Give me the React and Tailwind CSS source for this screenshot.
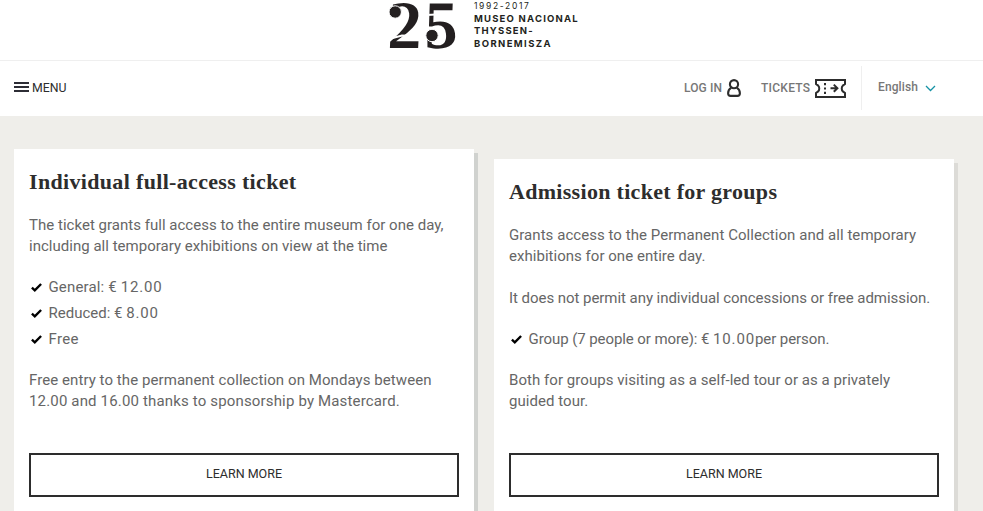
import clsx from 'clsx'

const TICKETS = [
  {
    title: 'Individual full-access ticket',
    titleClass: 'tracking-[0.33px]',
    cardClass: 'mt-[33px] shadow-[4px_4px_0_#d0d2cf]',
    blocks: [
      {
        gapClass: 'mt-[21px]',
        lines: [
          ['The ticket grants full access to the entire museum for one day,', 'tracking-[0.02px]'],
          ['including all temporary exhibitions on view at the time', 'tracking-[0.02px]'],
        ],
      },
      {
        gapClass: 'mt-[20px]',
        items: [
          { label: 'General: € ', price: '12.00', labelClass: 'tracking-[0.15px]' },
          { label: 'Reduced: € ', price: '8.00', labelClass: 'tracking-[0px]' },
          { label: 'Free', labelClass: 'tracking-[0.3px]' },
        ],
      },
      {
        gapClass: 'mt-[20px]',
        lines: [
          ['Free entry to the permanent collection on Mondays between', 'tracking-[0.07px]'],
          ['12.00 and 16.00 thanks to sponsorship by Mastercard.', 'tracking-[0.16px]'],
        ],
      },
    ],
  },
  {
    title: 'Admission ticket for groups',
    titleClass: 'tracking-[0.3px]',
    cardClass: 'mt-[43px] shadow-[4px_4px_0_#dcdbd7]',
    blocks: [
      {
        gapClass: 'mt-[21px]',
        lines: [
          ['Grants access to the Permanent Collection and all temporary', 'tracking-[0.05px]'],
          ['exhibitions for one entire day.', 'tracking-[0.03px]'],
        ],
      },
      {
        gapClass: 'mt-[21px]',
        lines: [['It does not permit any individual concessions or free admission.', 'tracking-[-0.05px]']],
      },
      {
        gapClass: 'mt-[20px]',
        items: [{ label: 'Group (7 people or more): € ', price: '10.00', rest: 'per person.', labelClass: 'tracking-[-0.08px]' }],
      },
      {
        gapClass: 'mt-[20px]',
        lines: [
          ['Both for groups visiting as a self-led tour or as a privately', 'tracking-[0.05px]'],
          ['guided tour.', 'tracking-[0.05px]'],
        ],
      },
    ],
  },
]

function Logo() {
  return (
    <div className="flex h-[60px] pl-[389px] text-[#231f20]">
      <div className="relative h-[50px] w-[85px]">
        <span className="inline-block origin-bottom-left skew-x-[8deg] whitespace-nowrap pl-[2px] font-['Liberation_Serif',serif] text-[68px] font-bold italic leading-[50px] tracking-[2px]">25</span>
        {/* stencil gaps and the round terminals */}
        <svg className="absolute left-0 top-0" width="72" height="50" viewBox="0 0 72 50">
          <path d="M0 39L13 35.5L31 36.5M37 15L58 14" fill="none" stroke="#fff" strokeWidth="2" />
          <g fill="currentColor" stroke="#fff" strokeWidth="1">
            <circle cx="6.2" cy="12" r="6.2" />
            <circle cx="43" cy="35.5" r="6.2" />
          </g>
        </svg>
      </div>
      <div className="whitespace-nowrap font-[Inter,sans-serif] text-[9.5px] font-bold leading-[12.5px]">
        <p className="text-[8.5px] font-normal tracking-[1.65px]">1992-2017</p>
        <p className="tracking-[1.2px]">MUSEO NACIONAL</p>
        <p className="tracking-[1.2px]">THYSSEN-</p>
        <p className="tracking-[1.4px]">BORNEMISZA</p>
      </div>
    </div>
  )
}

function UserIcon() {
  return (
    <svg width="14" height="18" viewBox="0 0 14 18" fill="none" stroke="#2d2d2d" strokeWidth="2.1">
      <circle cx="7" cy="5.2" r="4.1" />
      <path d="M4.3 8.6C2.2 9.8 1.1 12 1.1 14.3C1.1 16.1 2.1 16.9 3.6 16.9H10.4C11.9 16.9 12.9 16.1 12.9 14.3C12.9 12 11.8 9.8 9.7 8.6" />
    </svg>
  )
}

function TicketIcon() {
  return (
    <svg width="31" height="19" viewBox="0 0 31 19" fill="none" stroke="#2d2d2d" strokeWidth="2">
      <path d="M1 1H30V5L27.8 6.6C26.4 8 26.4 11 27.8 12.4L30 14V18H1V14L3.2 12.4C4.6 11 4.6 8 3.2 6.6L1 5Z" />
      <path d="M10 4V15" strokeDasharray="2.2 2.2" />
      <path d="M15.5 9.2H22M18.8 5.6L22.4 9.2L18.8 12.8" />
    </svg>
  )
}

function NavBar() {
  return (
    <nav className="flex h-[56px] items-center border-t border-[#efefef] pb-[1px] pl-[14px] font-[Roboto,sans-serif] text-[12px] font-medium text-[#777]">
      <div className="flex flex-col gap-[2px] pb-[2px]">
        <span className="h-[2px] w-[15px] bg-[#2d2d35]" />
        <span className="h-[2px] w-[15px] bg-[#2d2d35]" />
        <span className="h-[2px] w-[15px] bg-[#2d2d35]" />
      </div>
      <span className="ml-[3px] w-[649px] text-[12.3px] font-normal text-[#2d2d2d]">MENU</span>
      <span className="ml-[3px] w-[40px] whitespace-nowrap tracking-[0.1px]">LOG IN</span>
      <span className="ml-[3px]"><UserIcon /></span>
      <span className="ml-[20px] w-[50px] whitespace-nowrap tracking-[0.25px]">TICKETS</span>
      <span className="ml-[4px]"><TicketIcon /></span>
      <span className="ml-[15px] h-[44px] w-px bg-[#efefef]" />
      <span className="ml-[16px] w-[41px] pb-[2px] tracking-[0.1px]">English</span>
      <svg className="ml-[6px]" width="11" height="7" viewBox="0 0 11 7" fill="none" stroke="#1592a5" strokeWidth="1.3">
        <path d="M1 1L5.5 5.5L10 1" />
      </svg>
    </nav>
  )
}

function Check() {
  return (
    <svg width="11" height="9" viewBox="0 0 11 9" fill="none" stroke="#000" strokeWidth="2.4">
      <path d="M0.9 4.6L3.8 7.3L10.1 1" />
    </svg>
  )
}

function TicketCard({ ticket }) {
  return (
    <article className={clsx('h-[420px] w-[460px] bg-white px-[15px] pt-[21px]', ticket.cardClass)}>
      <h2 className={clsx("whitespace-nowrap font-['Liberation_Serif',serif] text-[22px] font-bold leading-[24px] text-[#2d2d2d]", ticket.titleClass)}>
        {ticket.title}
      </h2>
      {ticket.blocks.map((block, i) => (
        <div key={i} className={clsx('whitespace-nowrap text-[15px] leading-[21px]', block.gapClass)}>
          {block.lines?.map(([text, tracking]) => (
            <p key={text} className={tracking}>{text}</p>
          ))}
          {block.items && (
            <ul className="flex flex-col gap-[5px]">
              {block.items.map((item) => (
                <li key={item.label} className="flex items-center pl-[2px]">
                  <Check />
                  <span className={clsx('ml-[6.5px]', item.labelClass)}>
                    {item.label}
                    {item.price && <span className="tracking-[0.85px]">{item.price}</span>}
                    {item.rest}
                  </span>
                </li>
              ))}
            </ul>
          )}
        </div>
      ))}
      <button className="mt-[41px] block h-[44px] w-[430px] border-2 border-[#2d2d2d] pb-[2px] text-[12.5px] text-[#2d2d2d]">
        LEARN MORE
      </button>
    </article>
  )
}

export default function App() {
  return (
    <div className="h-[511px] w-[983px] overflow-hidden bg-white font-[Roboto,sans-serif] text-[#666]">
      <Logo />
      <NavBar />
      <main className="flex h-[395px] items-start gap-[20px] overflow-hidden bg-[#efeeea] pl-[14px]">
        {TICKETS.map((ticket) => (
          <TicketCard key={ticket.title} ticket={ticket} />
        ))}
      </main>
    </div>
  )
}
